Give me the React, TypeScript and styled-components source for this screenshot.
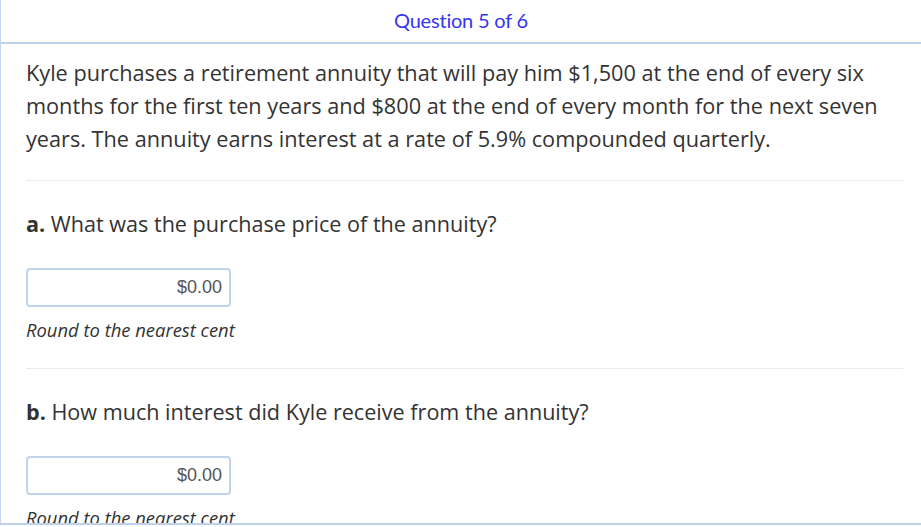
import React from "react";
import styled, { createGlobalStyle } from "styled-components";

const Global = createGlobalStyle`
  html, body { margin: 0; padding: 0; background: #fff; }
  body { font-family: "Open Sans", "Liberation Sans", sans-serif; color: #333; overflow: hidden; }
  * { box-sizing: border-box; }
`;

const Page = styled.div`
  min-height: 100vh;
  border-left: 1px solid #c3d5ee;
`;

const Header = styled.header`
  height: 44px;
  display: flex;
  align-items: center;
  justify-content: center;
  border-bottom: 2px solid #bfd1ea;
  padding-bottom: 2px;
`;

const Title = styled.h1`
  margin: 0;
  font-family: Lato, "Open Sans", sans-serif;
  font-weight: 400;
  font-size: 20px;
  letter-spacing: -0.2px;
  color: #3535f5;
`;

const Content = styled.main`
  padding: 12px 18px 0 25px;
`;

const Stem = styled.p`
  margin: 0;
  font-size: 21.7px;
  line-height: 33px;
  color: #333;
`;

const Divider = styled.hr`
  margin: 25px 0 0;
  border: 0;
  border-top: 1px solid #ebebeb;
`;

const Part = styled.section`
  padding: 26px 0 1px;
`;

const Prompt = styled.p`
  margin: 0;
  font-size: 21.6px;
  line-height: 33px;
  color: #333;
  b { font-weight: 700; }
`;

const Answer = styled.input`
  display: block;
  margin-top: 28px;
  width: 205px;
  height: 39px;
  border: 2px solid #c2d4ec;
  border-radius: 4px;
  padding: 0 7px;
  text-align: right;
  font-family: "Liberation Sans", Arial, sans-serif;
  font-size: 18px;
  color: #555;
  background: #fff;
  outline: none;
  &::placeholder { color: #555; }
`;

const Hint = styled.p`
  margin: 11px 0 0;
  font-size: 18.4px;
  line-height: 24px;
  font-style: italic;
  color: #333;
`;

const BottomBar = styled.div`
  position: fixed;
  left: 0;
  right: 0;
  bottom: 0;
  height: 4px;
  background: #fff;
  border-top: 2px solid #bfd1ea;
`;

export default function App() {
  return (
    <>
      <Global />
      <Page>
        <Header>
          <Title>Question 5 of 6</Title>
        </Header>
        <Content>
          <Stem>
            Kyle purchases a retirement annuity that will pay him $1,500 at the end of every six
            months for the first ten years and $800 at the end of every month for the next seven
            years. The annuity earns interest at a rate of 5.9% compounded quarterly.
          </Stem>
          <Divider />
          <Part>
            <Prompt>
              <b>a.</b> What was the purchase price of the annuity?
            </Prompt>
            <Answer placeholder="$0.00" />
            <Hint>Round to the nearest cent</Hint>
          </Part>
          <Divider />
          <Part>
            <Prompt>
              <b>b.</b> How much interest did Kyle receive from the annuity?
            </Prompt>
            <Answer placeholder="$0.00" />
            <Hint>Round to the nearest cent</Hint>
          </Part>
        </Content>
      </Page>
      <BottomBar />
    </>
  );
}
